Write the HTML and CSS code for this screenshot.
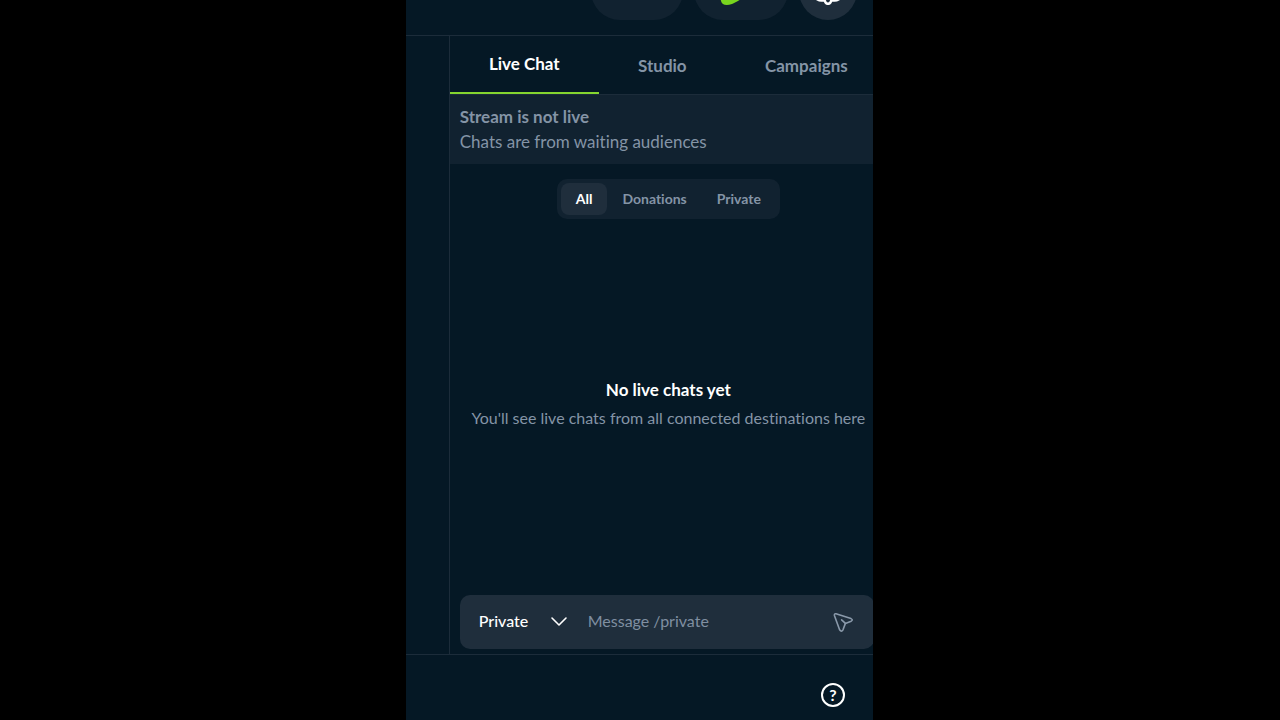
FILE: index.html
```html
<!DOCTYPE html>
<html lang="en">
<head>
    <meta charset="UTF-8" />
    <meta name="viewport" content="width=device-width, initial-scale=1" />
    <title>Live Chat</title>
    <link rel="stylesheet" href="styles.css">
</head>
<body>
<div class="app">
    <header class="topbar">
        <button class="pill" type="button" aria-label="Destinations"></button>
        <button class="pill pill-brand" type="button" aria-label="Channel">
            <svg width="42" height="42" viewBox="0 0 42 42">
                <path d="M13 4C18 4 34 14 35 20C36 25 24 31 18 34C12 36 8 35 7 31C5 22 8 4 13 4Z" fill="#78d51e"/>
            </svg>
        </button>
        <button class="round" type="button" aria-label="Settings">
            <svg width="28" height="28" viewBox="0 0 28 28" fill="none" stroke="#fff" stroke-width="2.6" stroke-linejoin="round">
                <path d="M14 2Q16 2 17.5 5Q21 3.5 24 5.5Q26 8 24 11V17Q26.5 20 24.5 22.5Q21.5 24.3 17.5 23Q16.5 26.8 14 26.8Q11.5 26.8 10.5 23Q6.5 24.3 3.5 22.5Q1.5 20 4 17V11Q2 8 4 5.5Q7 3.5 10.5 5Q12 2 14 2Z"/>
                <circle cx="14" cy="14" r="4"/>
            </svg>
        </button>
    </header>

    <main class="workspace">
        <section class="panel">
            <nav class="tabs">
                <button class="tab active" type="button">Live Chat</button>
                <button class="tab" type="button">Studio</button>
                <button class="tab" type="button">Campaigns</button>
            </nav>
            <div class="notice">
                <strong>Stream is not live</strong>
                <span>Chats are from waiting audiences</span>
            </div>
            <div class="filters">
                <button class="filter active" type="button">All</button>
                <button class="filter" type="button">Donations</button>
                <button class="filter" type="button">Private</button>
            </div>
            <div class="empty">
                <h2>No live chats yet</h2>
                <p>You'll see live chats from all connected destinations here</p>
            </div>
            <form class="composer">
                <div class="audience">
                    <select id="audience" aria-label="Send to">
                        <option>Private</option>
                        <option>All</option>
                    </select>
                    <svg width="18" height="18" viewBox="0 0 18 18" fill="none" stroke="#fff" stroke-width="1.6" stroke-linecap="round" stroke-linejoin="round">
                        <path d="M2 5L9 12L16 5"/>
                    </svg>
                </div>
                <input id="message" type="text" placeholder="Message /private" aria-label="Message" />
                <button class="send" type="submit" aria-label="Send">
                    <svg width="22" height="22" viewBox="0 0 22 22" fill="none" stroke="#8a99aa" stroke-width="1.6" stroke-linecap="round" stroke-linejoin="round">
                        <path d="M4 2.8L19 7.6Q21.4 8.8 19.2 10.2L13.4 12.4L11 18.8Q9.4 21.4 7.6 18.8L2.4 4.4Q2.2 2.4 4 2.8Z"/>
                        <path d="M13.4 12.4L9.6 8.8"/>
                    </svg>
                </button>
            </form>
        </section>
    </main>

    <footer class="bottombar">
        <button class="help" type="button" aria-label="Help">?</button>
    </footer>
</div>
</body>
</html>
```

FILE: styles.css
```css
* { box-sizing: border-box; }
body {
    margin: 0;
    background: #000;
    color: #8494a6;
    font-family: Lato, "Liberation Sans", sans-serif;
    font-size: 17px;
    font-variant-ligatures: none;
}
button,
input,
select {
    font: inherit;
    font-variant-ligatures: none;
    color: inherit;
    background: none;
    border: 0;
    padding: 0;
    margin: 0;
}
button { cursor: pointer; }
svg { display: block; }
.app {
    display: flex;
    flex-direction: column;
    width: 36.5%;
    height: 100vh;
    margin-left: 31.7%;
    background: #051825;
    overflow: hidden;
}

/* top bar */
.topbar {
    display: flex;
    flex: none;
    justify-content: flex-end;
    align-items: flex-end;
    gap: 11px;
    height: 36px;
    padding: 0 16px 15px;
    border-bottom: 1px solid #1c2c3a;
    overflow: hidden;
}
.pill,
.round {
    display: flex;
    flex: none;
    justify-content: center;
    align-items: center;
    height: 58px;
    border-radius: 29px;
    background: #112230;
}
.pill { width: 92px; }
.pill-brand {
    justify-content: flex-start;
    width: 94px;
    padding-left: 20px;
}
.round {
    width: 58px;
    background: #1f2e3c;
}

/* chat panel */
.workspace {
    display: flex;
    flex: 1;
    min-height: 0;
    padding-left: 43px;
}
.panel {
    display: flex;
    flex: none;
    flex-direction: column;
    width: calc(100% + 14px);
    border-left: 1px solid #1c2c3a;
}
.tabs {
    display: flex;
    flex: none;
    height: 59px;
    border-bottom: 1px solid #1c2c3a;
}
.tab {
    flex: 1 0 auto;
    padding: 0 36px;
    font-weight: 700;
}
.tab.active {
    padding-bottom: 2px;
    color: #fff;
    border-bottom: 2px solid #85d62f;
}
.notice {
    display: flex;
    flex-direction: column;
    padding: 9px 10px 10px;
    line-height: 25px;
    background: #112230;
}
.notice strong { font-weight: 700; }
.filters {
    display: flex;
    align-self: center;
    margin-top: 15px;
    padding: 4px;
    border-radius: 10px;
    background: #112230;
}
.filter {
    height: 32px;
    padding: 0 15px 2px;
    border-radius: 8px;
    font-size: 14px;
    font-weight: 700;
}
.filter.active {
    color: #fff;
    background: #1f2e3c;
}
.empty {
    display: flex;
    flex: 1;
    flex-direction: column;
    justify-content: center;
    padding-bottom: 6px;
    text-align: center;
    line-height: 28px;
    white-space: nowrap;
}
.empty h2 {
    margin: 0;
    color: #fff;
    font-size: 17px;
    font-weight: 700;
}
.empty p {
    margin: 0;
    font-size: 16px;
}

/* message box */
.composer {
    display: flex;
    align-items: center;
    height: 54px;
    margin: 0 13px 5px 10px;
    padding: 0 20px 0 19px;
    border-radius: 10px;
    background: #1f2e3c;
    font-size: 16px;
}
.audience {
    display: flex;
    align-items: center;
    margin-right: 20px;
}
.audience select {
    width: 71px;
    padding-bottom: 3px;
    color: #fff;
    font-weight: 500;
    appearance: none;
}
.composer input {
    flex: 1;
    min-width: 0;
    padding-bottom: 3px;
}
.composer input::placeholder {
    color: #7f8fa1;
    opacity: 1;
}

/* bottom bar */
.bottombar {
    display: flex;
    flex: none;
    justify-content: flex-end;
    align-items: center;
    height: 66px;
    padding: 14px 28px 0;
    border-top: 1px solid #1c2c3a;
}
.help {
    width: 24px;
    height: 24px;
    border: 2px solid #fff;
    border-radius: 50%;
    color: #fff;
    font-size: 16px;
    font-weight: 700;
    line-height: 18px;
}
```
